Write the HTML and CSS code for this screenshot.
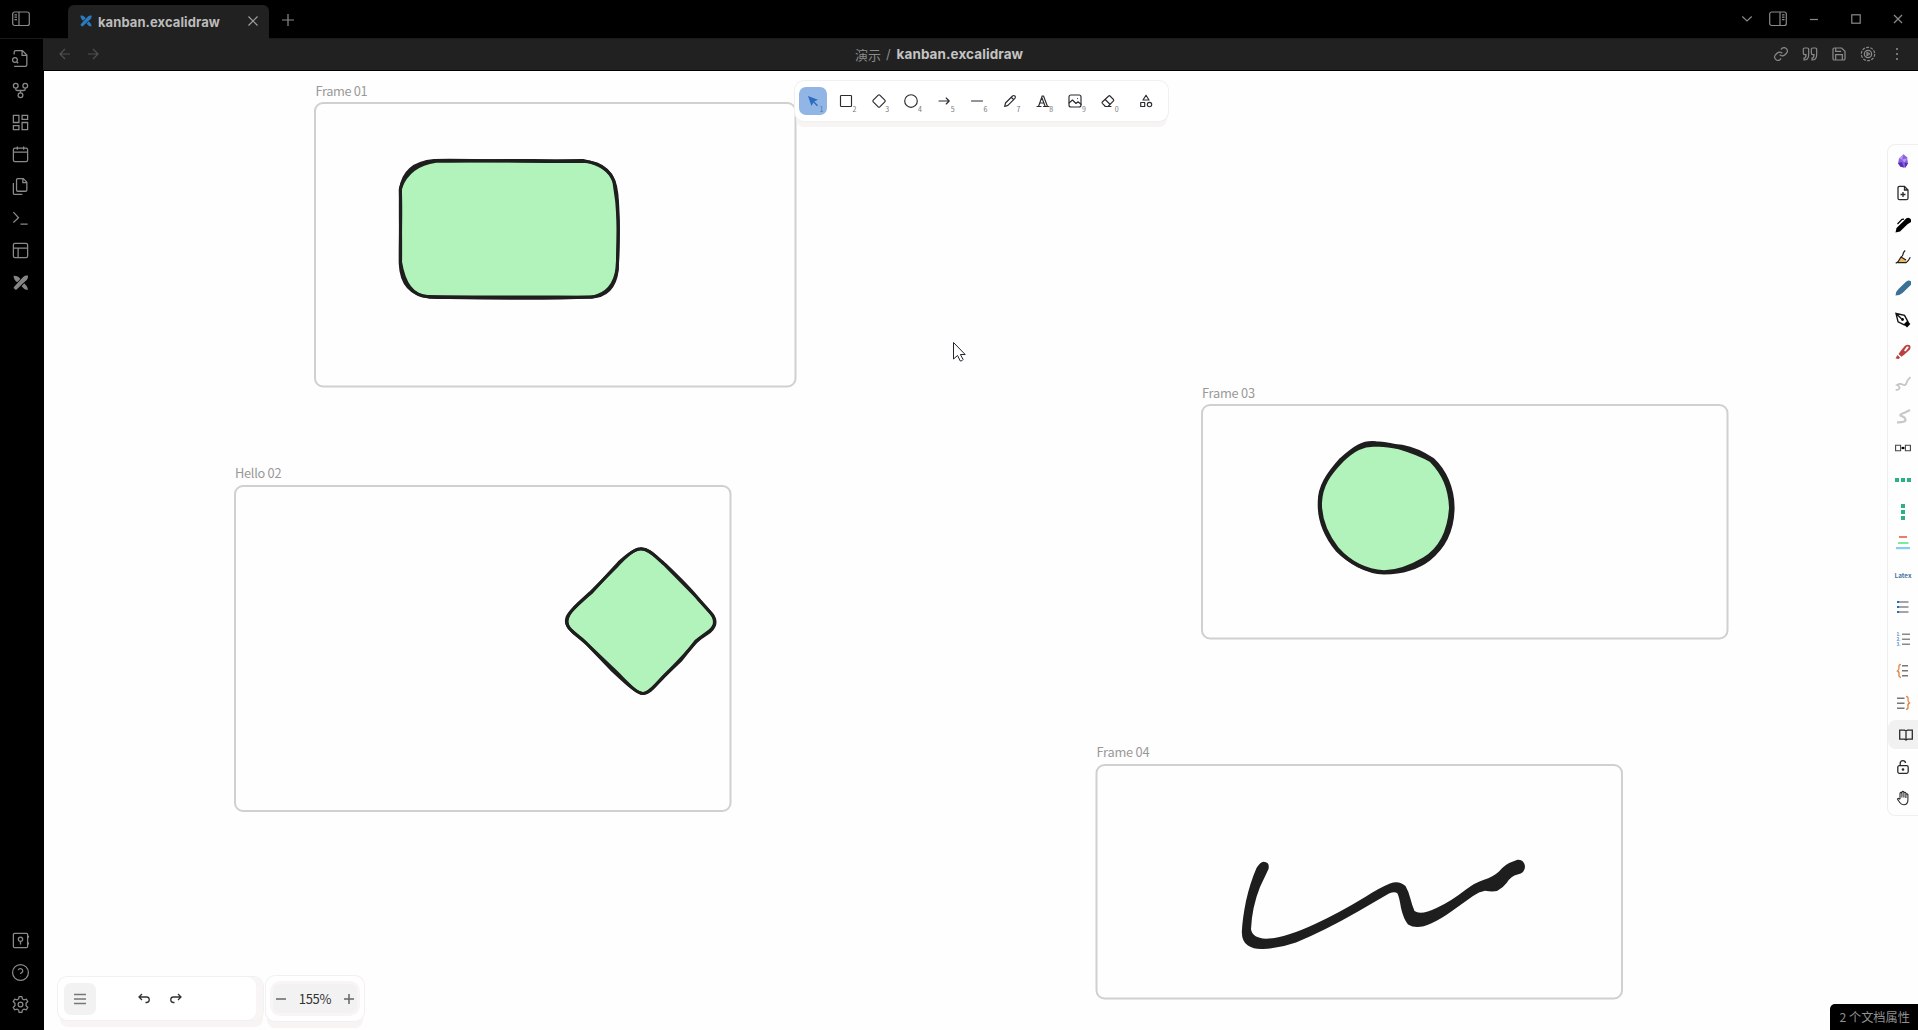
FILE: index.html
```html
<!DOCTYPE html>
<html lang="zh-CN">
<head>
<meta charset="utf-8">
<title>kanban.excalidraw</title>
<link rel="stylesheet" href="styles.css">
</head>
<body>
<svg class="defs" width="0" height="0">
  <symbol id="excali" viewBox="0 0 16 16">
    <path d="M.6.8C3 .6 5.200 1.300 6.600 2.900L7.600 4.200 4.300 7.600 3 6.500C1.400 5 .6 3 .6.8zM11.600 8.400l2 2.400c1 1 1.500 2.300 1.800 4.400-2 0-3.500-.6-4.500-1.600L8.800 11.700z"/>
    <path d="M15.500.6c-2.200-.1-4 .3-5.300 1.700L7.300 5.500 1.200 12c-.6.7-.6 1.300 0 2l.7.8c.7.700 1.500.7 2.200 0L10.400 8.500l3.500-3c1.300-1.300 1.700-2.900 1.600-4.900z"/>
  </symbol>
</svg>
<div class="app">
  <header class="titlebar">
    <div class="side-toggle">
      <svg width="18" height="16" viewBox="0 0 18 16" class="line"><rect x=".7" y="1" width="16.600" height="13.500" rx="2"/><path d="M7 1v13.500M2.500 3.800h2.500M2.500 6.200h2.500M2.500 8.600h2.500"/></svg>
    </div>
    <div class="tab">
      <svg class="tab-icon" width="12" height="12"><use href="#excali"/></svg>
      <span class="tab-title">kanban.excalidraw</span>
      <svg class="tab-close" width="10" height="10" viewBox="0 0 10 10"><path d="M.5.5l9 9M9.500.5l-9 9"/></svg>
    </div>
    <svg class="tab-add" width="12" height="12" viewBox="0 0 12 12"><path d="M6 0v12M0 6h12"/></svg>
    <div class="window-controls">
      <svg width="12" height="8" viewBox="0 0 12 8"><path d="M1.300 1.500L6 6l4.700-4.500"/></svg>
      <svg class="right-toggle" width="18" height="16" viewBox="0 0 18 16"><rect x=".7" y="1" width="16.600" height="13.500" rx="2"/><path d="M11 1v13.500M13 3.800h2.500M13 6.200h2.500M13 8.600h2.500"/></svg>
      <svg class="win" width="10" height="10" viewBox="0 0 10 10"><path d="M1 5.500h8"/></svg>
      <svg class="win" width="10" height="10" viewBox="0 0 10 10"><rect x=".8" y=".8" width="8.400" height="8.400"/></svg>
      <svg class="win" width="10" height="10" viewBox="0 0 10 10"><path d="M1 1l8 8M9 1L1 9"/></svg>
    </div>
  </header>
  <nav class="ribbon">
    <div class="ribbon-group">
      <svg viewBox="0 0 24 24"><path d="M4 22h14a2 2 0 0 0 2-2V7.500L14.500 2H6a2 2 0 0 0-2 2v3M14 2v6h6M9 18l-1.500-1.500"/><circle cx="5" cy="14" r="3"/></svg>
      <svg viewBox="0 0 24 24"><circle cx="12" cy="18" r="3"/><circle cx="6" cy="6" r="3"/><circle cx="18" cy="6" r="3"/><path d="M18 9v1a2 2 0 0 1-2 2H8a2 2 0 0 1-2-2V9M12 12v3"/></svg>
      <svg viewBox="0 0 24 24"><path d="M3 3h7v9H3zM14 3h7v5h-7zM14 12h7v9h-7zM3 16h7v5H3z"/></svg>
      <svg viewBox="0 0 24 24"><rect x="3" y="4" width="18" height="17" rx="2"/><path d="M16 2v4M8 2v4M3 9h18"/></svg>
      <svg viewBox="0 0 24 24"><path d="M15.500 2H8.600c-.9 0-1.600.7-1.600 1.600v12.800c0 .9.7 1.600 1.600 1.600h9.800c.9 0 1.600-.7 1.600-1.600V6.500zM3 7.600v12.800c0 .9.7 1.600 1.600 1.600h9.800M15 2v5h5"/></svg>
      <svg viewBox="0 0 24 24"><path d="M3 17l6.500-6L3 4M12 19h9"/></svg>
      <svg viewBox="0 0 24 24"><rect x="3" y="3" width="18" height="18" rx="2"/><path d="M3 9h18M9 21V9"/></svg>
      <svg class="solid"><use href="#excali" x="2" y="2" width="15.500" height="15.500"/></svg>
    </div>
    <div class="ribbon-group">
      <svg viewBox="0 0 24 24"><rect x="3" y="3" width="18" height="18" rx="1.500"/><circle cx="12" cy="10.500" r="2.700"/><path d="M12 13.200V17M22 6v2.500M22 14.500V17"/></svg>
      <svg viewBox="0 0 24 24"><circle cx="12" cy="12" r="10"/><path d="M9.100 9a3 3 0 0 1 5.800 1c0 2-3 2.500-3 4M12 17.200v.1"/></svg>
      <svg viewBox="0 0 24 24"><path d="M10.300 2h3.400l.7 3 2 1.200 3-.9 1.800 3L19 10.500v3l2.200 2.200-1.800 3-3-.9-2 1.200-.7 3h-3.400l-.7-3-2-1.200-3 .9-1.800-3L5 13.500v-3L2.800 8.300l1.800-3 3 .9 2-1.200z"/><circle cx="12" cy="12" r="3"/></svg>
    </div>
  </nav>
  <main class="workspace">
    <div class="view-header">
      <div class="nav-buttons">
        <svg width="12" height="12" viewBox="0 0 12 12"><path d="M11 6H1M6 1L1 6l5 5"/></svg>
        <svg width="12" height="12" viewBox="0 0 12 12"><path d="M1 6h10M6 1l5 5-5 5"/></svg>
      </div>
      <div class="crumbs"><span>演示</span><span class="slash">/</span><b>kanban.excalidraw</b></div>
      <div class="view-actions">
        <svg viewBox="0 0 24 24"><path d="M10 13a5 5 0 0 0 7.500.5l3-3a5 5 0 0 0-7-7l-1.700 1.700M14 11a5 5 0 0 0-7.500-.5l-3 3a5 5 0 0 0 7 7l1.700-1.700"/></svg>
        <svg viewBox="0 0 24 24"><path d="M3 21c3 0 7-1 7-8V5c0-1.300-.8-2-2-2H4c-1.300 0-2 .8-2 2v6c0 1.300.8 2 2 2h2c0 3-.5 5-3 5zM15 21c3 0 7-1 7-8V5c0-1.300-.8-2-2-2h-4c-1.300 0-2 .8-2 2v6c0 1.300.8 2 2 2h2c0 3-.5 5-3 5z"/></svg>
        <svg viewBox="0 0 24 24"><path d="M19 21H5a2 2 0 0 1-2-2V5a2 2 0 0 1 2-2h11l5 5v11a2 2 0 0 1-2 2zM17 21v-8H7v8M7 3v5h8"/></svg>
        <svg viewBox="0 0 24 24"><circle cx="12" cy="12" r="10" stroke-dasharray="4.300 2"/><circle cx="12" cy="12" r="5.500"/><path d="M10.500 9.500v5l4-2.500z"/></svg>
        <svg viewBox="0 0 24 24" class="dots"><circle cx="12" cy="4.500" r="1.600"/><circle cx="12" cy="12" r="1.600"/><circle cx="12" cy="19.500" r="1.600"/></svg>
      </div>
    </div>
    <div class="canvas">
      <svg class="board" width="1874" height="959" viewBox="44 71 1874 959">
        <g class="frames">
          <rect x="315" y="103" width="480.500" height="283.500" rx="8"/>
          <rect x="235" y="486" width="495.500" height="325" rx="8"/>
          <rect x="1202" y="405" width="525.500" height="233.500" rx="8"/>
          <rect x="1096.500" y="765" width="525.500" height="233.500" rx="8"/>
        </g>
        <g class="labels">
          <text x="315.500" y="96" textLength="52">Frame 01</text>
          <text x="235" y="478" textLength="46.500">Hello 02</text>
          <text x="1202" y="398" textLength="53">Frame 03</text>
          <text x="1096.500" y="757" textLength="53">Frame 04</text>
        </g>
        <path class="fill" d="M433 160L583 160.500Q616 164 617 198L618.500 225 617 270Q615 297 590 297.500L515 298 430 297Q400 295 400.500 264L400 190Q402 164 433 160z"/>
        <g class="sketch">
          <path d="M434 160.500C480 159.800 540 162.400 583 161.200Q614 163 616.800 194C619.400 220 618.300 245 617.200 270Q614 296.500 590 297C540 299.500 480 298 430 297.200Q401.500 294 400.300 264C399.800 240 401.500 215 400.300 190Q404 163 434 160.500"/>
          <path d="M436 161.300C490 160 540 161 583 160.600Q609 165.500 614 182C619 210 619 230 617.200 268Q614 293 592 297.200C545 297 485 297.500 428 296.600Q406 296 400.500 262C400.900 240 400 215 400.500 188Q409 165 436 161.300"/>
        </g>
        <path class="fill" d="M640.500 547.500L663 563 698 599 710 611.700Q720 622 710 631L697 640 681.500 660 651 690Q643 697 634 689L585 641.700 571.600 630Q562 621 574 608L590 592.700 619 562.700z"/>
        <g class="sketch">
          <path d="M640.500 549C648 548 656 557 663 562.500C674 573 690 588 699 600L710 612Q720 622 710 631.500C704 636 699 638 695 643C684 656 675 665 663 677.500C656 684 650 694 643 693.500C636 694 626 681 612 668L585 642C580 637 575 635 571 630Q562 621 571 611.500C580 601 585 598 592 592C605 578 612 570 619 562.500C626 556 634 549 640.500 549"/>
          <path d="M640.500 548.800C648 548 655 556 664 564L698 598.500 709 611Q719.500 622 710 630.500L696 641 681 660 663 677Q648 694 643 693.500C636 693 624 681 611 669L586 643 572 631Q561 622 574 608L590 593 616 567C625 557 634 549 640.500 548.800"/>
        </g>
        <path class="fill" d="M1376 443.500L1402 447 1432 459Q1447 475 1451.500 500Q1452 535 1432 556Q1410 572 1384 573Q1360 568 1337 550Q1319 530 1319.500 506Q1319 480 1341 460L1362 446Q1368 443 1376 443.500z"/>
        <g class="sketch circle">
          <path d="M1376 443C1385 443 1393 446 1402 446.500C1413 448.500 1423 453 1433 459.800C1444 470 1453.500 488 1452.800 510C1452 532 1443 548 1429 559C1416 569 1398 572.500 1384 572.800C1366 572 1349 562 1337 550C1324 534 1319 519 1319.500 503C1319 487 1328 474 1341 459.500C1355 447 1363 441.500 1376 443"/>
          <path d="M1376 445C1384 444.500 1390 445.500 1399 447.500C1409 450.500 1420 454 1431 460.500C1444 474 1450 488 1450.800 508C1449 533 1439 550 1424 559C1412 566 1397 572 1384 572C1367 571 1350 563 1337.500 549C1325 533 1320 519 1320.200 503C1321 485 1329 474 1342 460.500C1353 450 1363 444 1376 445"/>
        </g>
        <path class="ink" d="M1263.600 861.700Q1260 862 1256.500 868Q1250 883 1246 901Q1242.500 918 1241.800 932Q1242 942 1247.900 945.500Q1254 949.500 1263 949Q1279 948.500 1296 942.500Q1324 931 1358 911.500L1389 893.500Q1395 891 1397.500 893.500Q1399.500 898 1401 908Q1403.500 919 1408 924.500Q1417 930 1431 923.500Q1441 919 1452 911L1473 896Q1479 891.500 1485 890.700Q1492 892 1497 891Q1503 888 1507 882.500Q1511 876 1517.500 874.500Q1525 873 1525 866.500Q1524 859 1517.500 859.700L1513 861.500Q1505 864 1499 871.500Q1493 877 1484 879.700Q1475 882.500 1466 889.500Q1450 902 1437 907.700Q1421 915.500 1414.500 911Q1412 905 1410.500 899Q1408.500 891 1405.500 886Q1399 880 1390 883.500Q1379 888 1366 896.500Q1338 913.500 1315 924Q1284 938.500 1266 938.700Q1252 938 1251 929Q1252 907 1260 887L1268.500 869Q1270 862 1263.600 861.700z"/>
        <path class="pointer" d="M953.500 342.500v16.500l4-3.500 2.800 5.500q1.800.3 2.800-1.500l-2.700-5h4.800z"/>
      </svg>
      <div class="toolbar">
        <div class="tool active"><svg viewBox="0 0 20 20"><path class="arrowhead" d="M5 5l10 3.700-3.800 1.800 3.800 3.800-1 1-3.700-3.900L8.500 15z"/></svg><i>1</i></div>
        <div class="tool"><svg viewBox="0 0 20 20"><rect x="4.500" y="4.500" width="11" height="11" rx=".8"/></svg><i>2</i></div>
        <div class="tool"><svg viewBox="0 0 20 20"><path d="M9.200 4.200q.8-.8 1.600 0l5 5q.8.800 0 1.600l-5 5q-.8.800-1.600 0l-5-5q-.8-.8 0-1.600z"/></svg><i>3</i></div>
        <div class="tool"><svg viewBox="0 0 20 20"><circle cx="10" cy="10" r="6.300"/></svg><i>4</i></div>
        <div class="tool"><svg viewBox="0 0 20 20"><path d="M5 10h10M12.200 7l3 3-3 3"/></svg><i>5</i></div>
        <div class="tool"><svg viewBox="0 0 20 20"><path d="M4.500 10h11"/></svg><i>6</i></div>
        <div class="tool"><svg viewBox="0 0 20 20"><path d="M4.700 15.500l.8-3.500 7-7q1.300-1 2.400 0t0 2.400l-7 7zM11.500 6.500l2 2"/></svg><i>7</i></div>
        <div class="tool"><svg viewBox="0 0 20 20"><path d="M4 15.500h4M10.500 15.500h5.500M5.500 15.500L9.200 5M6.800 12h4M9 5h1.500l4 10.500M8.800 6.500l3.400 9"/></svg><i>8</i></div>
        <div class="tool"><svg viewBox="0 0 20 20"><rect x="4" y="4" width="12" height="12" rx="2"/><path d="M4 12l3.500-3 3.500 3.500 2-1.700 3 2.500M12.500 7.500v.1"/></svg><i>9</i></div>
        <div class="tool"><svg viewBox="0 0 20 20"><path d="M7.500 15.500L4.300 12.300q-.6-.7 0-1.300l6.400-6q.7-.6 1.300 0l3.500 3.500q.6.700 0 1.300L10 15.500zM7.200 8.500l4.500 4.500M7 15.500h6"/></svg><i>0</i></div>
        <div class="tool extra"><svg viewBox="0 0 20 20"><path d="M10 4.200l3 4.800H7z"/><rect x="4.700" y="11.500" width="4" height="4"/><circle cx="13.500" cy="13.500" r="2.200"/></svg></div>
      </div>
      <div class="footer-left">
        <div class="menu-button"><svg width="12" height="12" viewBox="0 0 12 12"><path d="M0 1.500h12M0 6h12M0 10.500h12"/></svg></div>
        <svg class="undo" width="12" height="11" viewBox="0 0 12 11"><path d="M4 1L1 4l3 3M1 4h7.500a2.700 2.700 0 0 1 0 5.500H7.500"/></svg>
        <svg class="redo" width="12" height="11" viewBox="0 0 12 11"><path d="M8 1l3 3-3 3M11 4H3.500a2.700 2.700 0 0 0 0 5.500h1"/></svg>
      </div>
      <div class="zoom-box">
        <div class="zoom-inner">
          <svg width="10" height="10" viewBox="0 0 10 10"><path d="M0 5h10"/></svg>
          <span>155%</span>
          <svg width="10" height="10" viewBox="0 0 10 10"><path d="M0 5h10M5 0v10"/></svg>
        </div>
      </div>
      <div class="side-panel">
        <div class="cell"><svg viewBox="0 0 16 16"><path fill="#8a63e0" d="M8.500 1.200l3.500 3 1 6-2.700 4.600-4.800-1L3 10.500l1-5z"/><path fill="#b79bf5" d="M8.500 1.200L7 6.500 4 5.500zM7 6.500l5-1-2.500 4z"/><path fill="#5a2fb5" d="M3 10l4-1 2 5.500-3.500-.7zM9.500 9.500l3.500.7-2.700 4.600z"/></svg></div>
        <div class="cell"><svg viewBox="0 0 16 16" class="stroke"><path d="M9.500 1.300h-5q-1.500 0-1.500 1.500v10.400q0 1.500 1.500 1.500h7q1.500 0 1.500-1.500V5zM9.500 1.300V5H13M8 7v5M5.500 9.500h5"/></svg></div>
        <div class="cell"><svg viewBox="0 0 16 16"><path d="M.5 15.500l1-4.500L9 3.800l3.500 3.500L5 14.500zM10 2.600q2.500-3 5-1t.3 4l-2.800 1.700L9 3.800z"/><path d="M2.500 7l4.500-4.700 2-.2" fill="none" stroke="#000" stroke-width="1.200"/></svg></div>
        <div class="cell"><svg viewBox="0 0 16 16"><path fill="#f0b45c" d="M3 13l3-5 5.500 3-1 2.700H5z"/><path d="M.7 14.200L3 12.700 6 8q2-.5 2-3 .5-2 2.200-3.500M2.500 13.700H11q2-1 4.300-5.500M6 8l5 3" fill="none" stroke="#222" stroke-width="1.200"/></svg></div>
        <div class="cell"><svg viewBox="0 0 16 16"><path fill="#3b7196" d="M.5 15.500Q1 11 3.500 9L11 1.800Q14-.5 15.700 1.300t-.7 4.500L7.500 13Q4.500 15.500.5 15.500z"/></svg></div>
        <div class="cell"><svg viewBox="0 0 16 16"><path d="M1 1.500l8.500 1.800 3.300 6-3.500 3.500-6.200-3zM1 1.500l5.500 5.200" fill="none" stroke="#111" stroke-width="1.400"/><circle cx="7.500" cy="7.500" r="1.400"/><path d="M9 12.500L12.700 9l2.600 3-3.300 3.500z"/></svg></div>
        <div class="cell"><svg viewBox="0 0 16 16"><path fill="#bd4040" fill-rule="evenodd" d="M3.500 10L6 6.500l4-4.700q3-2 4.700-.5t0 4.500L10 10l-3.500 2.700zM9 6.500l1.500 1 3.200-4q0-1.500-1.800-1zM2.500 11l2.500 2.500L3.800 15 .5 14.500z"/></svg></div>
        <div class="cell"><svg viewBox="0 0 16 16"><path d="M.7 14.200q4.500-.7 3.800-2.700T2 9q3-2 5.500-.5T11 8t1.500-3.500L15.500 1" fill="none" stroke="#c4c4c4" stroke-width="1.700"/></svg></div>
        <div class="cell"><svg viewBox="0 0 16 16"><path d="M2 14.300q9 .2 8.500-2.500T6.500 8 10 4.500l5-2.500" fill="none" stroke="#c8c8c8" stroke-width="2.200"/></svg></div>
        <div class="cell"><svg viewBox="0 0 16 16"><path d="M.6 5.200h5v5.600h-5zM10.400 5.200h5v5.600h-5zM5.600 8h4.800" fill="none" stroke="#444" stroke-width="1.100"/><circle cx="8" cy="8" r="1.200"/></svg></div>
        <div class="cell"><svg viewBox="0 0 16 16"><path fill="#2eb086" d="M0 6h4v4H0zM6 6h4v4H6zM12 6h4v4h-4z"/></svg></div>
        <div class="cell"><svg viewBox="0 0 16 16"><path fill="#2eb086" d="M6 0h4v4H6zM6 6h4v4H6zM6 12h4v4H6z"/></svg></div>
        <div class="cell"><svg viewBox="0 0 16 16"><path fill="#ee7a6b" d="M4 1h8v2H4z"/><path fill="#7ee89b" d="M3 7h10.500v2H3z"/><path fill="#86cdf4" d="M1 12h14v2.200H1z"/></svg></div>
        <div class="cell latex">Latex</div>
        <div class="cell"><svg viewBox="0 0 16 16"><path fill="#3169b0" d="M2 2h2.600v2H2zM2 7h2.600v2H2zM2 12h2.600v2H2z"/><path fill="#888" d="M5 2.200h8.500v1.600H5zM5 7.200h8.500v1.600H5zM5 12.200h8.500v1.600H5z"/></svg></div>
        <div class="cell nums"><span>1.<br>2.<br>3.</span><svg viewBox="0 0 9 16"><path fill="#888" d="M0 2.500h8v1.600H0zM0 7.500h8v1.600H0zM0 12.500h8v1.600H0z"/></svg></div>
        <div class="cell"><svg viewBox="0 0 16 16"><path d="M6 1.500Q3.500 1.500 4 4t-1.500 4Q4.500 9 4 11.500t2 3" fill="none" stroke="#e08a4a" stroke-width="1.400"/><path fill="#777" d="M7 2h6v1.400H7zM7 7h6v1.400H7zM7 12h6v1.400H7z"/></svg></div>
        <div class="cell"><svg viewBox="0 0 16 16"><path d="M11 1.500q2.500 0 2 2.500t1.500 4q-2 1-1.500 3.500t-2 3" fill="none" stroke="#e08a4a" stroke-width="1.400"/><path fill="#777" d="M2 2.500h7.500v1.400H2zM2 7.500h7.500v1.400H2zM2 12.500h7.500v1.400H2z"/></svg></div>
        <div class="cell"><div class="on"><svg viewBox="0 0 16 16" class="stroke"><path d="M1.700 3.200h4.800L8 4l1.500-.8h4.800v9H9.500L8 13l-1.500-.8H1.700zM8 4v8.500"/></svg></div></div>
        <div class="cell"><svg viewBox="0 0 16 16" class="stroke"><rect x="2.800" y="6.700" width="10.400" height="7.600" rx="1.500"/><path d="M5.200 6.700V4.300q0-2.600 2.700-2.600 2.300 0 2.600 2.300"/><circle cx="8" cy="10.500" r=".7"/></svg></div>
        <div class="cell"><svg viewBox="0 0 16 16" class="stroke hand"><path d="M5 9V3.200q.9-1.600 1.900 0V7.500M6.900 7.500V2.100q1-1.500 2 0V7.500M8.900 3q1-1.400 2 0v5M10.900 4.500q1.100-1.300 2 0V10q0 4.700-4.200 4.700-2.500 0-3.700-1.900L2.500 9.200q.8-1.700 2.500.3"/></svg></div>
      </div>
      <div class="status">2 个文档属性</div>
    </div>
  </main>
</div>
</body>
</html>
```
FILE: styles.css
```css
* { box-sizing: border-box; }
body {
  margin: 0;
  background: #000;
  font-family: Inter, "Noto Sans CJK SC", sans-serif;
}
svg { display: block; flex: none; }
.defs { position: absolute; }
.app {
  display: grid;
  grid-template-columns: 43px 1fr;
  grid-template-rows: 39px 1fr;
  width: 1918px;
  height: 1030px;
  overflow: hidden;
}

/* Title bar */
.titlebar {
  grid-column: 1 / 3;
  display: flex;
  align-items: center;
  background: #000;
  box-shadow: inset 0 -1px #1a1a1a;
}
.titlebar svg, .view-header svg, .ribbon svg {
  fill: none;
  stroke: #8a8a8a;
  stroke-width: 1.2;
}
.side-toggle { width: 68px; padding: 0 0 1px 12px; }
.tab {
  display: flex;
  align-items: center;
  align-self: flex-end;
  width: 201px;
  height: 34px;
  padding: 0 11px 2px 12px;
  border-radius: 6px 6px 0 0;
  background: #212121;
}
.titlebar .tab-icon { fill: #2a7bc0; stroke: none; }
.tab-title {
  margin-left: 6px;
  padding-top: 1px;
  font-size: 13px;
  font-weight: 700;
  letter-spacing: .08px;
  color: #bcbcbc;
}
.titlebar .tab-close { margin-left: auto; stroke: #a0a0a0; }
.tab-add { margin: 0 0 0 13px; }
.window-controls {
  display: flex;
  align-items: center;
  margin: 0 15px 1px auto;
}
.window-controls .right-toggle { margin-left: 16px; }
.window-controls .win { margin-left: 32px; }
.window-controls .right-toggle + .win { margin-left: 22px; }

/* Left ribbon */
.ribbon {
  display: flex;
  flex-direction: column;
  justify-content: space-between;
  padding: 3px 0 16.500px 11px;
}
.ribbon-group { display: flex; flex-direction: column; gap: 13px; padding-top: 7px; }
.ribbon svg { width: 19px; height: 19px; stroke-width: 1.600; }
.ribbon svg.solid { fill: #858585; stroke: none; }

/* View header */
.workspace { display: flex; flex-direction: column; min-width: 0; }
.view-header {
  display: grid;
  grid-template-columns: 1fr auto 1fr;
  align-items: center;
  height: 32px;
  padding: 0 13px 1px 16px;
  background: #212121;
  border-bottom: 1px solid #000;
}
.nav-buttons { display: flex; gap: 16px; }
.nav-buttons svg { stroke: #505050; }
.crumbs {
  display: flex;
  align-items: center;
  margin-right: 86px;
  font-size: 13px;
  color: #8a8a8a;
}
.crumbs .slash { margin: 0 6px 0 5px; }
.crumbs b { font-size: 13.500px; letter-spacing: .08px; color: #c4c4c4; }
.view-actions { display: flex; gap: 13px; justify-content: flex-end; }
.view-actions svg { width: 16px; height: 16px; stroke-width: 1.800; }
.view-actions svg.dots { fill: #8a8a8a; stroke: none; }

/* Drawing canvas */
.canvas {
  position: relative;
  flex: 1;
  margin-left: 1px;
  background: #fefefe;
  font-family: "Noto Sans CJK SC", sans-serif;
}
.frames rect { fill: none; stroke: #d0d0d0; stroke-width: 2; }
.labels text { font-size: 12.800px; fill: #999; }
.fill { fill: #b2f2bb; }
.sketch path { fill: none; stroke: #1e1e1e; stroke-width: 3.100; stroke-linejoin: round; stroke-linecap: round; }
.sketch.circle path { stroke-width: 3.500; }
.ink { fill: #1e1e1e; }
.pointer { fill: #fff; stroke: #23252e; stroke-width: 1; }

/* Shape toolbar */
.toolbar {
  position: absolute;
  left: 751px;
  top: 10px;
  display: flex;
  align-items: center;
  gap: 4.800px;
  width: 373px;
  height: 40px;
  padding: 0 4px;
  border-radius: 9px;
  background: #fff;
  box-shadow: 0 0 0 1px #f0f0f0, 0 7px 0 -1px #f8f4f4;
}
.tool {
  display: grid;
  place-items: center;
  position: relative;
  width: 28px;
  height: 28px;
  border-radius: 7px;
}
.tool.active { background: #91b5e4; }
.tool svg { width: 20px; height: 20px; fill: none; stroke: #2b2b30; stroke-width: 1.150; stroke-linejoin: round; stroke-linecap: round; }
.tool .arrowhead { fill: #2b6cc0; stroke: none; }
.tool.extra { margin-left: 5.500px; }
.tool i {
  position: absolute;
  right: 3.500px;
  bottom: 2px;
  font-size: 7px;
  line-height: 8px;
  font-style: normal;
  color: #777;
}
.tool.active i { color: #4377bb; }

/* Bottom controls */
.footer-left {
  position: absolute;
  left: 14px;
  top: 906px;
  display: flex;
  align-items: center;
  width: 205px;
  height: 43px;
  padding-left: 6px;
  border-radius: 9px;
  background: #fff;
  box-shadow: inset -7px 0 #f9f5f5, 0 0 0 1px #f1f1f1, 1px 8px 0 -1px #f8f4f4;
}
.footer-left svg, .zoom-box svg { fill: none; stroke: #333; stroke-width: 1.300; }
.menu-button { display: grid; place-items: center; width: 32px; height: 32px; border-radius: 7px; background: #f2f2f2; }
.footer-left .menu-button svg { stroke: #777; stroke-width: 1.600; }
.undo { margin-left: 42px; }
.redo { margin-left: 20px; }
.zoom-box {
  position: absolute;
  left: 222px;
  top: 905px;
  width: 98px;
  height: 45px;
  padding: 8px 7px;
  border-radius: 9px;
  background: #fff;
  box-shadow: 0 0 0 1px #f1f1f1, 0 8px 0 -1px #f8f4f4;
}
.zoom-inner {
  display: flex;
  align-items: center;
  justify-content: space-between;
  height: 29px;
  padding: 0 3px 0 3px;
  border-radius: 7px;
  background: #f2f2f2;
  box-shadow: 0 0 0 3px #f9f5f5;
  font-size: 13px;
  letter-spacing: -.3px;
  color: #333;
}
.zoom-box svg { stroke: #666; stroke-width: 1.500; }

/* Right tool panel */
.side-panel {
  position: absolute;
  right: 0;
  top: 73px;
  width: 31px;
  height: 672px;
  border: 1px solid #efefef;
  border-right: 0;
  border-radius: 8px 0 0 8px;
  background: #fefefe;
}
.cell { display: grid; place-items: center; height: 31.880px; }
.cell svg { width: 16px; height: 16px; margin-right: 0; }
.cell .stroke { fill: none; stroke: #2a2a2a; stroke-width: 1.300; }
.cell .hand { stroke-width: 1.100; }
.cell.latex { font-size: 6.300px; font-weight: 700; color: #46709f; }
.cell.nums { grid-template-columns: 6px 9px; justify-content: center; }
.cell.nums span { font-size: 4.500px; line-height: 5px; font-weight: 700; color: #4b86c4; }
.cell.nums svg { width: 9px; }
.on { display: grid; place-items: center; width: 30px; height: 29px; padding-left: 5px; border-radius: 8px 0 0 8px; background: #f1f1f1; }

.status {
  position: absolute;
  right: 0;
  bottom: 0;
  display: flex;
  align-items: center;
  width: 88px;
  height: 26px;
  padding: 0 0 1px 9.500px;
  border-radius: 5px 0 0 0;
  background: #000;
  font-size: 12.200px;
  white-space: nowrap;
  color: #909090;
}
```
